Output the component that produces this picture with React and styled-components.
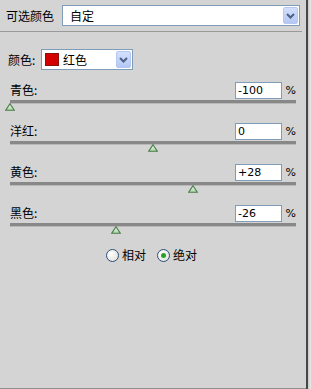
import React from 'react'
import styled, { createGlobalStyle } from 'styled-components'

const GlobalStyle = createGlobalStyle`
  html, body {
    margin: 0;
    padding: 0;
    background: #d4d4d4;
  }
  body {
    font-family: "Noto Sans CJK SC", "Noto Sans", sans-serif;
    font-size: 12px;
    color: #000;
  }
`

const Frame = styled.div`
  width: 311px;
  height: 389px;
  display: flex;
  background: #d4d4d4;
  overflow: hidden;
`

const Main = styled.div`
  width: 306px;
  height: 389px;
  box-sizing: border-box;
  border-bottom: 1px solid #8e8e8e;
  display: flex;
  flex-direction: column;
`

const EdgeDark = styled.div`
  width: 2px;
  background: #474747;
`

const EdgeLight = styled.div`
  width: 3px;
  background: linear-gradient(to right, #c9c9c9, #ececec);
`

const Header = styled.div`
  height: 32px;
  width: 302px;
  box-sizing: border-box;
  border-bottom: 1px solid #9a9a9a;
  display: flex;
  align-items: center;
  padding-left: 6px;
`

const Label = styled.span`
  width: ${p => p.$w}px;
  font-size: 12px;
  line-height: 14px;
  white-space: nowrap;
  flex: none;
`

const Select = styled.div`
  width: ${p => p.$w}px;
  height: 21px;
  box-sizing: border-box;
  border: 1px solid #7f9db9;
  background: #fff;
  display: flex;
  align-items: center;
  padding-left: ${p => p.$pad}px;
  gap: 4px;
  flex: none;
`

const SelectText = styled.span`
  flex: 1;
  font-size: 12px;
  line-height: 14px;
`

const Swatch = styled.span`
  width: 14px;
  height: 13px;
  background: #d40000;
  border: 1px solid #8a1010;
  box-sizing: border-box;
`

const ArrowBtn = styled.span`
  width: 15px;
  height: 17px;
  margin-right: 1px;
  box-sizing: border-box;
  border: 1px solid #b6c8f0;
  border-radius: 2px;
  background: linear-gradient(to bottom, #d3e0fd, #b4c8f4);
  display: flex;
  align-items: center;
  justify-content: center;
`

const ColourRow = styled.div`
  display: flex;
  align-items: center;
  padding-left: 8px;
  margin-top: 17px;
`

const SliderRow = styled.div`
  position: relative;
  width: 296px;
  height: 41px;
  box-sizing: border-box;
  padding-left: 10px;
  margin-top: ${p => p.$first ? 10 : 0}px;
`

const RowTop = styled.div`
  height: 20px;
  display: flex;
  align-items: center;
`

const Field = styled.div`
  margin-left: auto;
  width: 47px;
  height: 17px;
  box-sizing: border-box;
  border: 1px solid #7f9db9;
  background: #fff;
  font-family: "DejaVu Sans", sans-serif;
  font-size: 11px;
  line-height: 15px;
  padding-left: 2px;
`

const Percent = styled.span`
  width: 14px;
  text-align: right;
  font-family: "DejaVu Sans", sans-serif;
  font-size: 11px;
`

const Track = styled.div`
  position: relative;
  height: 3px;
  background: #888888;
  border-bottom: 1px solid #b8b8b8;
`

const Thumb = styled.svg`
  position: absolute;
  top: 3px;
  width: 10px;
  height: 8px;
`

const RadioRow = styled.div`
  display: flex;
  align-items: center;
  padding-left: 106px;
  margin-top: 4px;
  gap: 11px;
`

const RadioItem = styled.label`
  display: flex;
  align-items: center;
  gap: 3px;
  font-size: 12px;
  line-height: 14px;
`

const RadioDot = styled.span`
  width: 13px;
  height: 13px;
  box-sizing: border-box;
  border-radius: 50%;
  border: 1px solid #2c4f7a;
  background: radial-gradient(circle at 35% 35%, #ffffff, #dcdcd6);
  display: flex;
  align-items: center;
  justify-content: center;
  &::after {
    content: '';
    width: 5px;
    height: 5px;
    border-radius: 50%;
    background: ${p => p.$on ? '#2aa02a' : 'transparent'};
  }
`

const Chevron = () => (
  <svg width="9" height="6" viewBox="0 0 9 6">
    <path d="M1 1 L4.5 4.5 L8 1" fill="none" stroke="#4d6185" strokeWidth="2" />
  </svg>
)

const sliders = [
  { name: '青色:', value: '-100', v: -100 },
  { name: '洋红:', value: '0', v: 0 },
  { name: '黄色:', value: '+28', v: 28 },
  { name: '黑色:', value: '-26', v: -26 },
]

const App = () => {
  return (
    <>
      <GlobalStyle />
      <Frame>
        <Main>
          <Header>
            <Label $w={56}>可选颜色</Label>
            <Select $w={238} $pad={7}>
              <SelectText>自定</SelectText>
              <ArrowBtn><Chevron /></ArrowBtn>
            </Select>
          </Header>

          <ColourRow>
            <Label $w={33}>颜色:</Label>
            <Select $w={92} $pad={3}>
              <Swatch />
              <SelectText>红色</SelectText>
              <ArrowBtn><Chevron /></ArrowBtn>
            </Select>
          </ColourRow>

          {sliders.map((s, i) => (
            <SliderRow key={s.name} $first={i === 0}>
              <RowTop>
                <Label $w={40}>{s.name}</Label>
                <Field>{s.value}</Field>
                <Percent>%</Percent>
              </RowTop>
              <Track>
                <Thumb viewBox="0 0 10 8" style={{ left: 143 + s.v * 1.43 - 5 }}>
                  <defs>
                    <linearGradient id={`tg${i}`} x1="0" y1="0" x2="0" y2="1">
                      <stop offset="0" stopColor="#eef8ec" />
                      <stop offset="1" stopColor="#a9d6a2" />
                    </linearGradient>
                  </defs>
                  <polygon points="5,0.7 9.3,7.3 0.7,7.3" fill={`url(#tg${i})`} stroke="#4a7a4a" strokeWidth="1.1" />
                </Thumb>
              </Track>
            </SliderRow>
          ))}

          <RadioRow>
            <RadioItem><RadioDot />相对</RadioItem>
            <RadioItem><RadioDot $on />绝对</RadioItem>
          </RadioRow>
        </Main>
        <EdgeDark />
        <EdgeLight />
      </Frame>
    </>
  )
}

export default App
